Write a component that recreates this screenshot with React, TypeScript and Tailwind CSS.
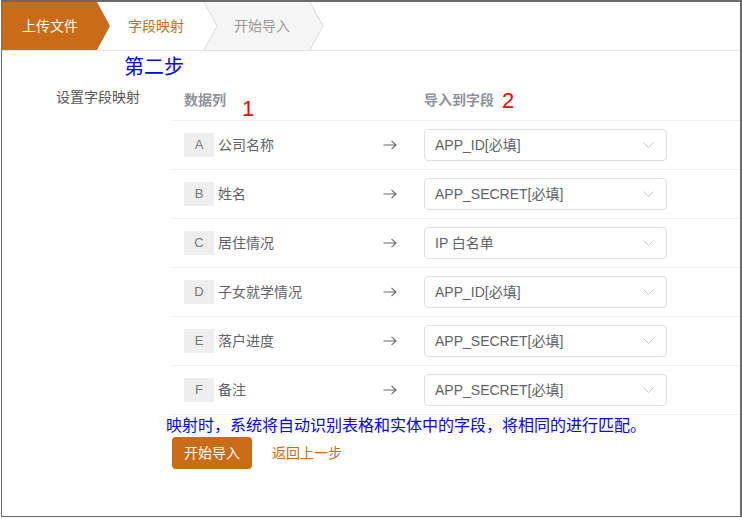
import React from 'react';

const rows = [
  { key: 'A', name: '公司名称', field: 'APP_ID[必填]' },
  { key: 'B', name: '姓名', field: 'APP_SECRET[必填]' },
  { key: 'C', name: '居住情况', field: 'IP 白名单' },
  { key: 'D', name: '子女就学情况', field: 'APP_ID[必填]' },
  { key: 'E', name: '落户进度', field: 'APP_SECRET[必填]' },
  { key: 'F', name: '备注', field: 'APP_SECRET[必填]' },
];

const StepBar: React.FC = () => (
  <div className="relative h-[48px] border-b border-[#e4e4e4] box-content">
    <svg className="absolute left-0 top-0" width="340" height="48" viewBox="0 0 340 48">
      <polygon points="0,0 95,0 108,24 95,48 0,48" fill="#c96c17" />
      <polygon points="202,0 308,0 321,24 308,48 202,48 215,24" fill="#f5f5f5" />
      <polyline points="202,0 215,24 202,48" fill="none" stroke="#d9d9d9" strokeWidth="1" />
      <polyline points="308,0 321,24 308,48" fill="none" stroke="#d9d9d9" strokeWidth="1" />
    </svg>
    <div className="relative flex h-full items-center text-[14px]">
      <span className="ml-[20px] text-white">上传文件</span>
      <span className="ml-[50px] text-[#c96c17]">字段映射</span>
      <span className="ml-[50px] text-[#999999]">开始导入</span>
    </div>
  </div>
);

const Chevron: React.FC = () => (
  <svg width="11" height="7" viewBox="0 0 11 7">
    <polyline points="0.5,0.5 5.5,5.5 10.5,0.5" fill="none" stroke="#c0c4cc" strokeWidth="1" />
  </svg>
);

export default function App() {
  return (
    <div
      className="w-[742px] h-[519px] bg-white"
      style={{ fontFamily: '"Liberation Sans", "Noto Sans CJK SC", sans-serif' }}
    >
      <div className="ml-[1px] w-[741px] h-[517px] border-t-2 border-l border-r-2 border-b border-[#6b6b6b] overflow-hidden">
        <StepBar />

        <div className="mt-[2px] h-[28px] pl-[122px] text-[20px] leading-[28px] text-[#0000ff]">第二步</div>

        <div className="flex">
          <div className="w-[170px] shrink-0 pl-[54px] text-[14px] leading-[32px] text-[#555555]">设置字段映射</div>

          <div className="flex-1">
            <div className="grid h-[39px] grid-cols-[200px_52px_1fr] items-center text-[14px] text-[#909399] font-bold">
              <div className="flex items-center pl-[12px]">
                <span>数据列</span>
                <span className="relative top-[8px] ml-[16px] text-[22px] font-normal leading-none text-[#ff0000]">1</span>
              </div>
              <div />
              <div className="flex items-center">
                <span>导入到字段</span>
                <span className="ml-[8px] text-[22px] font-normal leading-none text-[#ff0000]">2</span>
              </div>
            </div>

            <div className="border-b border-[#ebeef5]">
              {rows.map(r => (
                <div
                  key={r.key}
                  className="grid h-[49px] grid-cols-[200px_52px_1fr] items-center border-t border-[#ebeef5] text-[14px] text-[#606266]"
                >
                  <div className="flex items-center pl-[12px]">
                    <span className="flex h-[24px] w-[30px] items-center justify-center bg-[#eeeeee] text-[13px] text-[#777777]">{r.key}</span>
                    <span className="ml-[4px]">{r.name}</span>
                  </div>
                  <div className="pl-[11px] text-[#666666]">
                    <svg width="14" height="10" viewBox="0 0 14 10">
                      <path d="M0.5 5 H13 M8.5 0.8 L13 5 L8.5 9.2" fill="none" stroke="#666666" strokeWidth="1.1" />
                    </svg>
                  </div>
                  <div>
                    <div className="flex h-[32px] w-[243px] items-center justify-between rounded-[4px] border border-[#dcdfe6] pl-[10px] pr-[12px]">
                      <span>{r.field}</span>
                      <Chevron />
                    </div>
                  </div>
                </div>
              ))}
            </div>
          </div>
        </div>

        <div className="pl-[164px] text-[16px] leading-[22px] text-[#0000ff]">
          映射时，系统将自动识别表格和实体中的字段，将相同的进行匹配。
        </div>

        <div className="flex items-center pl-[170px]">
          <button className="h-[32px] w-[80px] rounded-[4px] bg-[#c96c17] text-[14px] text-white">开始导入</button>
          <span className="ml-[20px] text-[14px] text-[#c96c17]">返回上一步</span>
        </div>
      </div>
    </div>
  );
}
